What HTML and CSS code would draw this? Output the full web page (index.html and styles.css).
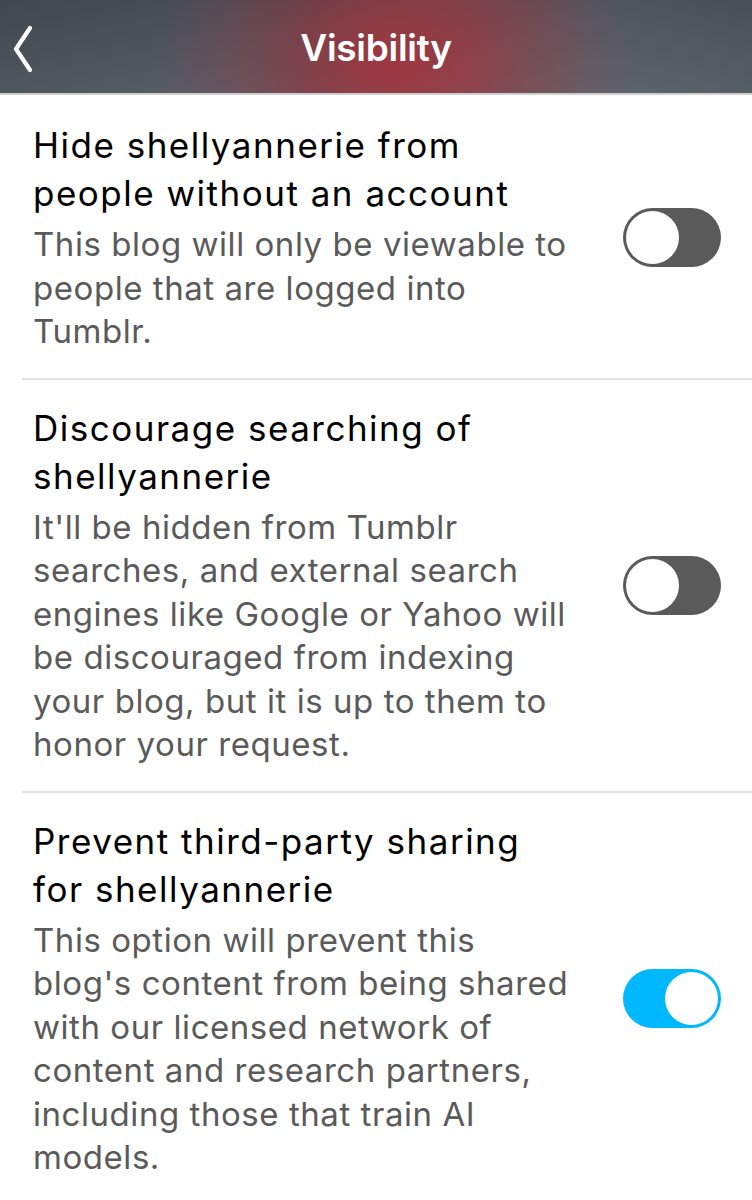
FILE: index.html
```html
<!DOCTYPE html>
<html lang="en">
<head>
<meta charset="utf-8">
<title>Visibility</title>
<link rel="stylesheet" href="styles.css">
</head>
<body>
  <header class="topbar">
    <button class="back" aria-label="Back">
      <svg width="22" height="48" viewBox="0 0 22 48">
        <path d="M18 3 L4 24 L18 45" fill="none" stroke="#fff" stroke-width="4.2" stroke-linecap="round" stroke-linejoin="round"/>
      </svg>
    </button>
    <h1 class="title">Visibility</h1>
  </header>

  <main class="settings">
    <section class="row">
      <div class="text">
        <h2 class="label">Hide shellyannerie from people without an account</h2>
        <p class="desc">This blog will only be viewable to people that are logged into Tumblr.</p>
      </div>
      <span class="switch"><span class="knob"></span></span>
    </section>

    <section class="row">
      <div class="text">
        <h2 class="label">Discourage searching of shellyannerie</h2>
        <p class="desc">It'll be hidden from Tumblr searches, and external search engines like Google or Yahoo will be discouraged from indexing your blog, but it is up to them to honor your request.</p>
      </div>
      <span class="switch"><span class="knob"></span></span>
    </section>

    <section class="row">
      <div class="text">
        <h2 class="label">Prevent third-party sharing for shellyannerie</h2>
        <p class="desc">This option will prevent this blog's content from being shared with our licensed network of content and research partners, including those that train AI models.</p>
      </div>
      <span class="switch on"><span class="knob"></span></span>
    </section>
  </main>
</body>
</html>
```

FILE: styles.css
```css
* {
  box-sizing: border-box;
}

body {
  margin: 0;
  background: #fff;
  font-family: "Inter", "Noto Sans", sans-serif;
  color: #000;
}

/* top navigation bar with the blog's tinted backdrop */
.topbar {
  position: relative;
  height: 95px;
  display: flex;
  align-items: center;
  justify-content: center;
  padding-top: 2px;
  background:
    radial-gradient(ellipse 240px 170px at 395px 62px, rgba(165, 52, 62, 0.92), rgba(150, 60, 70, 0.4) 55%, rgba(120, 70, 80, 0) 100%),
    linear-gradient(180deg, rgba(0, 0, 0, 0.06), rgba(255, 255, 255, 0.06)),
    linear-gradient(90deg, #454b54 0%, #4d535c 30%, #56474f 42%, #6d4a52 62%, #555b64 78%, #4b545e 100%);
  border-bottom: 2px solid #cfcfcf;
}

.back {
  position: absolute;
  left: 12px;
  top: 25px;
  padding: 0;
  border: 0;
  background: none;
  line-height: 0;
}

.title {
  margin: 0;
  color: #fff;
  font-size: 37px;
  font-weight: 600;
  letter-spacing: -0.3px;
}

.settings {
  display: flex;
  flex-direction: column;
}

.row {
  display: flex;
  align-items: center;
  gap: 40px;
  padding: 26px 31px 24px 33px;
  position: relative;
}

.row + .row::before {
  content: "";
  position: absolute;
  top: 0;
  left: 22px;
  right: 0;
  height: 2px;
  background: #e3e3e3;
}

.text {
  flex: 1;
  min-width: 0;
}

.label {
  margin: 0;
  max-width: 505px;
  font-size: 35px;
  font-weight: 400;
  line-height: 48px;
  letter-spacing: 1.5px;
  color: #000;
}

.desc {
  margin: 6px 0 0;
  font-size: 33px;
  line-height: 43.5px;
  letter-spacing: 0.55px;
  color: #5a5a5a;
}

/* on/off switch */
.switch {
  flex: none;
  width: 98px;
  height: 59px;
  border-radius: 30px;
  background: #5a5a5a;
  padding: 3px;
  display: flex;
}

.knob {
  width: 53px;
  height: 53px;
  border-radius: 50%;
  background: #fff;
}

.switch.on {
  background: #00b8ff;
  justify-content: flex-end;
}
```
